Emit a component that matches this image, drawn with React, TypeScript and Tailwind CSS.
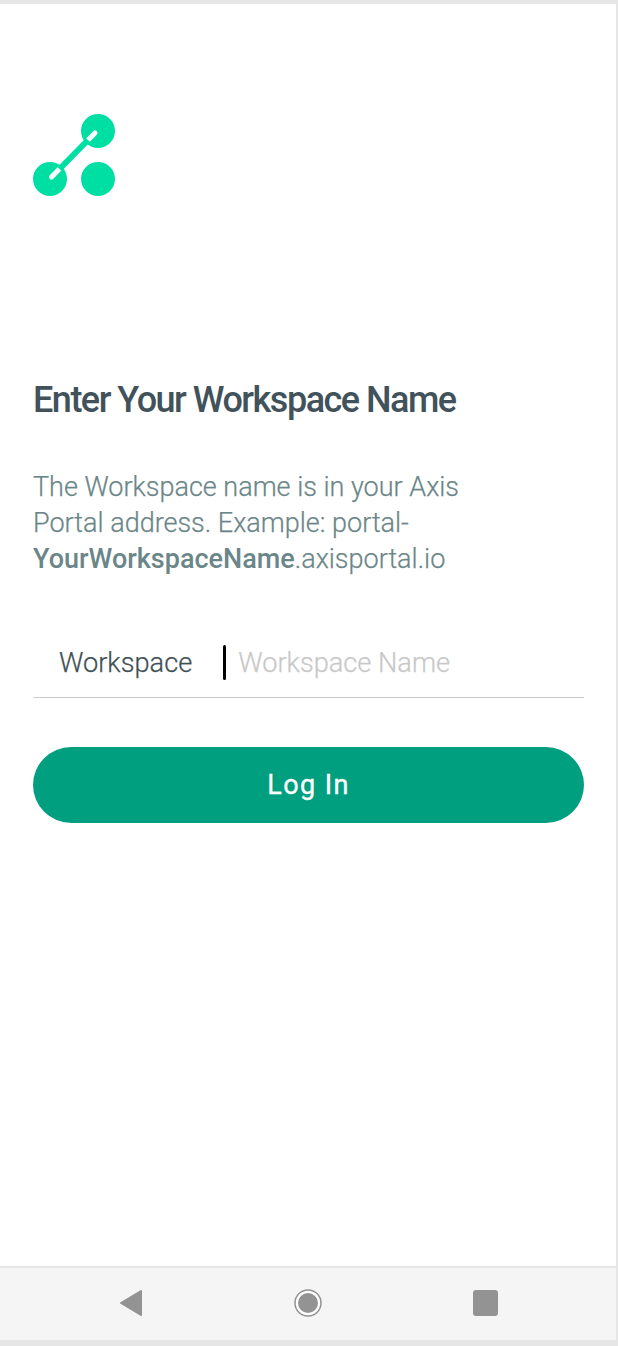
function Logo() {
  return (
    <svg width="82" height="82" viewBox="0 0 82 82" className="block">
      <circle cx="65" cy="17" r="17" fill="#00dfa3" />
      <circle cx="17" cy="65" r="17" fill="#00dfa3" />
      <circle cx="65" cy="65" r="17" fill="#00dfa3" />
      <path d="M62 19L18.5 63" stroke="#ffffff" strokeWidth="5" strokeLinecap="round" />
      <path d="M55 26L26.5 55" stroke="#00dfa3" strokeWidth="6" />
    </svg>
  );
}

export default function App() {
  return (
    <div className="flex h-[1346px] w-[618px] flex-col overflow-hidden bg-[#e6e6e6] font-['Roboto',sans-serif]">
      <div className="mt-1 mb-[6px] flex flex-1 flex-col pr-[2px]">
        <main className="flex-1 bg-white pl-[33px] pr-[32px] pt-[110px]">
          <Logo />
          <h1 className="mt-[184px] text-[36px] leading-[40px] font-medium tracking-[-1.5px] text-[#41525a]">
            Enter Your Workspace Name
          </h1>
          <p className="mt-[49px] text-[27px] leading-[36px] font-light text-[#6b8689] [-webkit-text-stroke:0.25px]">
            The Workspace name is in your Axis
            <br />
            Portal address. Example: portal-
            <br />
            <span className="font-medium [-webkit-text-stroke:0px]">YourWorkspaceName</span>.axisportal.io
          </p>
          <div className="mt-[45px] flex h-[76px] items-center border-b border-[#cccccc] pl-[26px] pt-[8px]">
            <span className="text-[27.2px] font-light text-[#3f4f55] [-webkit-text-stroke:0.25px]">Workspace</span>
            <span className="mb-[2px] ml-[31px] h-[35px] w-[3px] rounded-full bg-black" />
            <span className="ml-[12px] text-[27.2px] font-light text-[#c8c8c8] [-webkit-text-stroke:0.25px]">Workspace Name</span>
          </div>
          <button className="mt-[49px] flex h-[76px] w-full items-center justify-center rounded-full bg-[#009f80] text-[27px] tracking-[1.4px] text-white [-webkit-text-stroke:0.35px]">
            Log In
          </button>
        </main>
        <nav className="flex h-[74px] items-center justify-between border-t-2 border-[#e6e6e6] bg-[#f5f5f5] pb-[2px] pl-[119px] pr-[118px]">
          <svg width="24" height="28" viewBox="0 0 24 28">
            <path d="M22 2L2 14L22 26Z" fill="#939393" stroke="#939393" strokeWidth="2" strokeLinejoin="round" />
          </svg>
          <svg width="28" height="28" viewBox="0 0 28 28">
            <circle cx="14" cy="14" r="13" fill="#ffffff" stroke="#939393" strokeWidth="1.5" />
            <circle cx="14" cy="14" r="10" fill="#939393" />
          </svg>
          <span className="h-[26px] w-[25px] rounded-[3px] bg-[#939393]" />
        </nav>
      </div>
    </div>
  );
}
